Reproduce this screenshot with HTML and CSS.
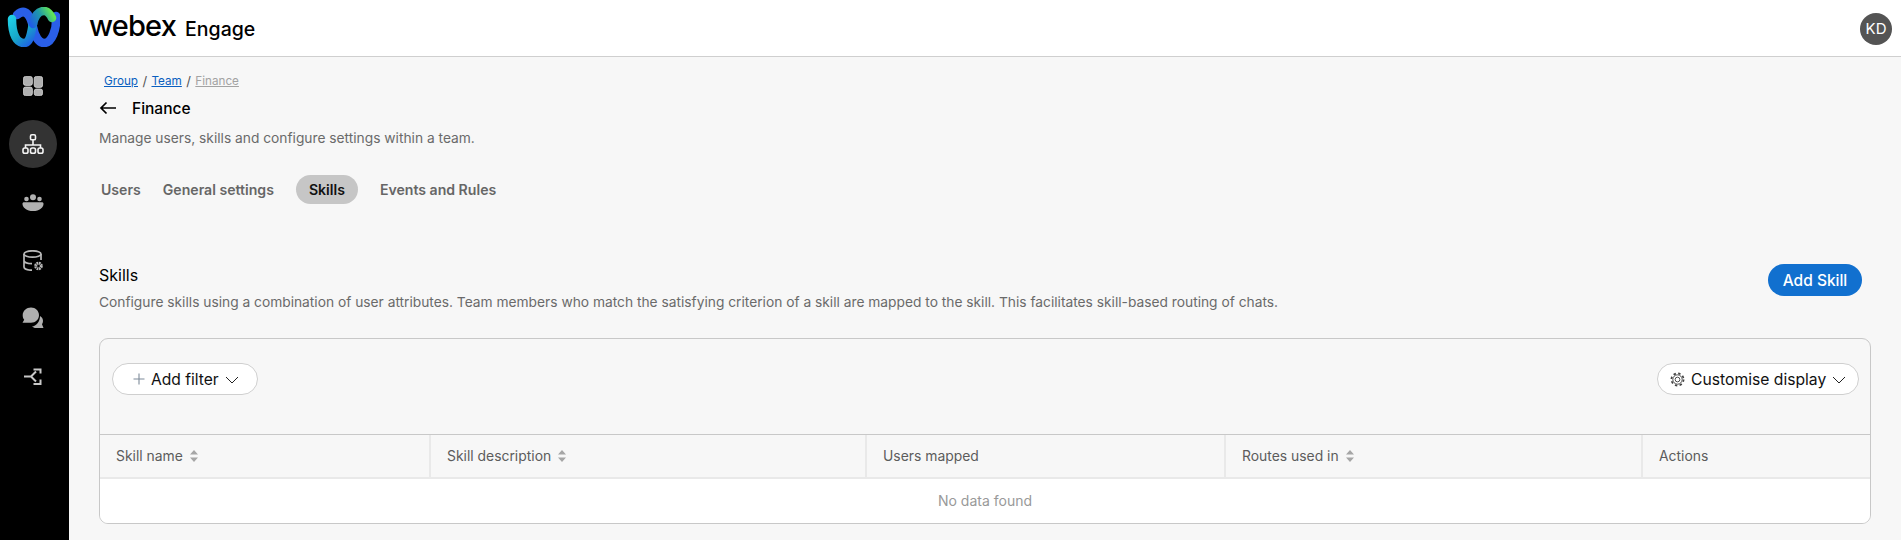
FILE: index.html
```html
<!DOCTYPE html>
<html lang="en">
<head>
<meta charset="utf-8">
<title>Webex Engage</title>
<link rel="stylesheet" href="styles.css">
</head>
<body>
<div class="app">
  <nav class="rail">
    <svg class="logo" viewBox="0 0 54 40" width="54" height="40">
      <defs>
        <linearGradient id="g1" gradientUnits="userSpaceOnUse" x1="5" y1="10" x2="28" y2="36"><stop offset="0" stop-color="#1fd0e6"/><stop offset=".55" stop-color="#18a6c8"/><stop offset="1" stop-color="#1f5ce6"/></linearGradient>
        <linearGradient id="g2" gradientUnits="userSpaceOnUse" x1="26" y1="20" x2="47" y2="8"><stop offset="0" stop-color="#1f5ce6"/><stop offset=".55" stop-color="#1f9aa8"/><stop offset="1" stop-color="#5fe35a"/></linearGradient>
      </defs>
      <path d="M11 8C20 0 25 10 27 20c2 10 6 16 11 16 8 0 13-14 12-27" fill="none" stroke="#2a5fe8" stroke-width="8.500" stroke-linecap="round"/>
      <path d="M6 12c0 16 5 24 12 24 7 0 7-12 9-19" fill="none" stroke="url(#g1)" stroke-width="8.500" stroke-linecap="round"/>
      <path d="M27 17c2-9 6-13 11-13 4 0 6 3 8 7" fill="none" stroke="url(#g2)" stroke-width="8.500" stroke-linecap="round"/>
    </svg>
    <a class="rail-item">
      <svg viewBox="0 0 20 20" width="20" height="20"><g fill="#b0b0b0" stroke="#e8e8e8" stroke-width=".7"><rect x=".4" y=".4" width="9" height="9" rx="2.2"/><rect x=".4" y="11" width="9" height="8.600" rx="2.2"/><rect x="11.200" y=".4" width="8.400" height="11" rx="2.2"/><rect x="11.200" y="13" width="8.400" height="6.600" rx="2.2"/></g></svg>
    </a>
    <a class="rail-item is-active">
      <svg viewBox="0 0 22 20" width="22" height="20"><g fill="none" stroke="#f4f4f4" stroke-width="1.600"><rect x="8.500" y=".8" width="5" height="5" rx="1.400"/><path d="M11 6v5.500M3.500 14v-3h15v3"/><rect x="1" y="14" width="5" height="5.200" rx="1.800"/><rect x="8.500" y="14" width="5" height="5.200" rx="1.800"/><rect x="16" y="14" width="5" height="5.200" rx="1.800"/></g></svg>
    </a>
    <a class="rail-item">
      <svg viewBox="0 0 22 17" width="22" height="17"><g fill="#b0b0b0"><circle cx="11" cy="3.200" r="3"/><circle cx="4.500" cy="5" r="2.300"/><circle cx="17.500" cy="5" r="2.300"/><path d="M.5 9.700c0-.8.7-1.400 1.500-1.400h18c.8 0 1.500.6 1.500 1.400 0 3.800-4 7.300-10.500 7.300S.5 13.500.5 9.700z"/></g></svg>
    </a>
    <a class="rail-item">
      <svg viewBox="0 0 21 21" width="21" height="21"><g fill="none" stroke="#b8b8b8" stroke-width="1.700"><ellipse cx="9.500" cy="4" rx="8.500" ry="3.200"/><path d="M1 4v13c0 1.800 3.500 3.200 8 3.200M18 4v6M1 10.500c0 1.800 3.500 3.200 8 3.200"/></g><circle cx="15.500" cy="16" r="2.800" fill="none" stroke="#b8b8b8" stroke-width="3" stroke-dasharray="1.600 .6"/></svg>
    </a>
    <a class="rail-item">
      <svg viewBox="0 0 22 22" width="22" height="22"><g fill="#b0b0b0"><path d="M9 .5c4.500 0 8 3.300 8 7.700 0 4.300-3.500 7.500-8 7.500H.5l1.700-3C1.100 11.500.7 10 .7 8.200.7 3.800 4.500.5 9 .5z"/><path d="M18 9c1.900 1 3 2.800 3 5 0 1.300-.4 2.400-1 3.300l1.500 3.700h-7.500c-1.600 0-3-.6-4-1.500 4.200-.3 8-4.800 8-10.500z"/></g></svg>
    </a>
    <a class="rail-item">
      <svg viewBox="0 0 18 17" width="18" height="17"><g fill="none" stroke="#c8c8c8" stroke-width="2"><path d="M0 8.500h7l5-5M7 8.500l5 5"/><path d="M9.500 1.500h7v4M16.500 11.500v4.500h-7"/></g></svg>
    </a>
  </nav>
  <div class="main">
    <header class="topbar">
      <div class="brand"><span class="wordmark">webex</span><span class="product">Engage</span></div>
      <div class="avatar">KD</div>
    </header>
    <main class="content">
      <div class="crumbs"><a class="crumb">Group</a><span class="sep">/</span><a class="crumb">Team</a><span class="sep">/</span><a class="crumb crumb-current">Finance</a></div>
      <div class="title-row">
        <svg viewBox="0 0 18 14" width="18" height="14"><path d="M17 7H2M7.500 1.500L2 7l5.500 5.500" fill="none" stroke="#000" stroke-width="1.700"/></svg>
        <h1>Finance</h1>
      </div>
      <p class="lead lead-page">Manage users, skills and configure settings within a team.</p>
      <div class="tabs">
        <a class="tab tab-users">Users</a>
        <a class="tab tab-general">General settings</a>
        <a class="tab tab-skills">Skills</a>
        <a class="tab tab-events">Events and Rules</a>
      </div>
      <section class="section-head">
        <div>
          <h2>Skills</h2>
          <p class="lead">Configure skills using a combination of user attributes. Team members who match the satisfying criterion of a skill are mapped to the skill. This facilitates skill-based routing of chats.</p>
        </div>
        <button class="primary">Add Skill</button>
      </section>
      <section class="card">
        <div class="toolbar">
          <button class="pill pill-filter">
            <svg viewBox="0 0 12 12" width="12" height="12"><path d="M6 .5v11M.5 6h11" stroke="#7d8a99" stroke-width="1.100" fill="none"/></svg>
            <span>Add filter</span>
            <svg class="chev" viewBox="0 0 14 8" width="14" height="8"><path d="M1 1l6 6 6-6" fill="none" stroke="#222" stroke-width="1"/></svg>
          </button>
          <button class="pill pill-display">
            <svg viewBox="0 0 16 16" width="15" height="15"><g fill="none" stroke="#444"><circle cx="8" cy="8" r="2.500" stroke-width="1"/><circle cx="8" cy="8" r="5" stroke-width="1"/><circle cx="8" cy="8" r="6.500" stroke-width="1.800" stroke-dasharray="2.550 2.550"/></g></svg>
            <span>Customise display</span>
            <svg class="chev" viewBox="0 0 14 8" width="14" height="8"><path d="M1 1l6 6 6-6" fill="none" stroke="#222" stroke-width="1"/></svg>
          </button>
        </div>
        <div class="thead">
          <div class="th">Skill name <svg class="sort" viewBox="0 0 8 12" width="8" height="12"><path d="M4 0l4 4.500H0zM4 12l4-4.500H0z" fill="#a6a6a6"/></svg></div>
          <div class="th">Skill description <svg class="sort" viewBox="0 0 8 12" width="8" height="12"><path d="M4 0l4 4.500H0zM4 12l4-4.500H0z" fill="#a6a6a6"/></svg></div>
          <div class="th">Users mapped</div>
          <div class="th">Routes used in <svg class="sort" viewBox="0 0 8 12" width="8" height="12"><path d="M4 0l4 4.500H0zM4 12l4-4.500H0z" fill="#a6a6a6"/></svg></div>
          <div class="th">Actions</div>
        </div>
        <div class="empty">No data found</div>
      </section>
    </main>
  </div>
</div>
</body>
</html>
```

FILE: styles.css
```css
* { box-sizing: border-box; }
html, body { margin: 0; height: 100%; overflow: hidden; }
body { font-family: Inter, "Liberation Sans", sans-serif; background: #f7f7f7; color: #000; }
p, h1, h2 { margin: 0; font-weight: 400; }
button { font-family: inherit; cursor: pointer; }

.app { display: flex; height: 540px; }

.rail { width: 69px; flex: none; background: #000; display: flex; flex-direction: column; align-items: center; padding: 7px 3px 0 0; }
.logo { margin-bottom: 15px; flex: none; }
.rail-item { width: 48px; height: 48px; flex: none; border-radius: 50%; display: flex; align-items: center; justify-content: center; margin-bottom: 10px; }
.is-active { background: #333; }

.main { flex: 1; min-width: 0; display: flex; flex-direction: column; }
.topbar { height: 57px; flex: none; background: #fff; border-bottom: 1px solid #cfcfcf; display: flex; align-items: center; justify-content: space-between; padding: 1px 9px 0 20px; }
.brand { display: flex; align-items: baseline; gap: 9px; margin-bottom: 5px; }
.wordmark { font-size: 29px; font-weight: 500; letter-spacing: -.8px; line-height: 1; }
.product { font-size: 19.5px; font-weight: 500; }
.avatar { width: 32px; height: 32px; border-radius: 50%; background: #545454; color: #fff; font-size: 15px; display: flex; align-items: center; justify-content: center; }

.content { padding: 16px 30px 0 30px; }
.crumbs { display: flex; gap: 4.4px; font-size: 11.7px; line-height: 16px; padding-left: 5px; color: #555; }
.sep { font-size: 13px; }
.crumb { color: #0a5fc0; text-decoration: underline; }
.crumb-current { color: #a3a3a3; }
.title-row { display: flex; align-items: center; gap: 15px; margin-top: 8px; height: 22px; }
h1 { font-size: 15.5px; font-weight: 500; }
.lead { font-size: 13.77px; line-height: 20px; color: #6a6a6a; }
.lead-page { margin-top: 9px; }

.tabs { display: flex; align-items: center; margin-top: 27px; height: 29px; font-size: 14.1px; font-weight: 600; color: #666; }
.tab { display: block; line-height: 29px; border-radius: 15px; }
.tab-users { padding: 0 2px; margin-right: 20px; }
.tab-general { margin-right: 22px; }
.tab-skills { background: #c6c6c6; color: #111; padding: 0 13px; margin-right: 10px; }
.tab-events { padding: 0 12px; }

.section-head { display: flex; justify-content: space-between; align-items: flex-start; margin-top: 61px; padding-right: 9px; }
h2 { font-size: 16px; line-height: 20px; margin-bottom: 7px; }
.primary { height: 32px; width: 94px; margin-top: -1px; border: 0; border-radius: 16px; background: #1170cf; color: #fff; font-size: 15.5px; font-weight: 500; padding: 0; }

.card { margin-top: 26px; height: 186px; border: 1px solid #c8c8c8; border-radius: 9px; overflow: hidden; display: flex; flex-direction: column; }
.toolbar { height: 96px; flex: none; display: flex; justify-content: space-between; align-items: flex-start; padding: 24px 11px 0 12px; border-bottom: 1px solid #c8c8c8; }
.pill { height: 32px; border: 1px solid #cfcfcf; border-radius: 16px; background: #fff; display: flex; align-items: center; padding: 0; color: #111; }
.pill-filter { width: 146px; padding-left: 20px; gap: 6px; font-size: 15.6px; }
.pill-display { width: 202px; padding-left: 12px; gap: 6px; font-size: 15.7px; }
.chev { margin-top: 2px; }

.thead { height: 44px; flex: none; display: grid; grid-template-columns: 329px 436px 359px 417px 1fr; border-bottom: 2px solid #e9e9e9; }
.th { display: flex; align-items: center; gap: 7px; padding: 0 0 1px 16px; font-size: 13.9px; color: #5c5c5c; border-left: 2px solid #e9e9e9; }
.th:first-child { border-left: 0; }
.empty { flex: 1; background: #fff; display: flex; align-items: center; justify-content: center; padding-bottom: 2px; font-size: 14px; color: #999; }
```
